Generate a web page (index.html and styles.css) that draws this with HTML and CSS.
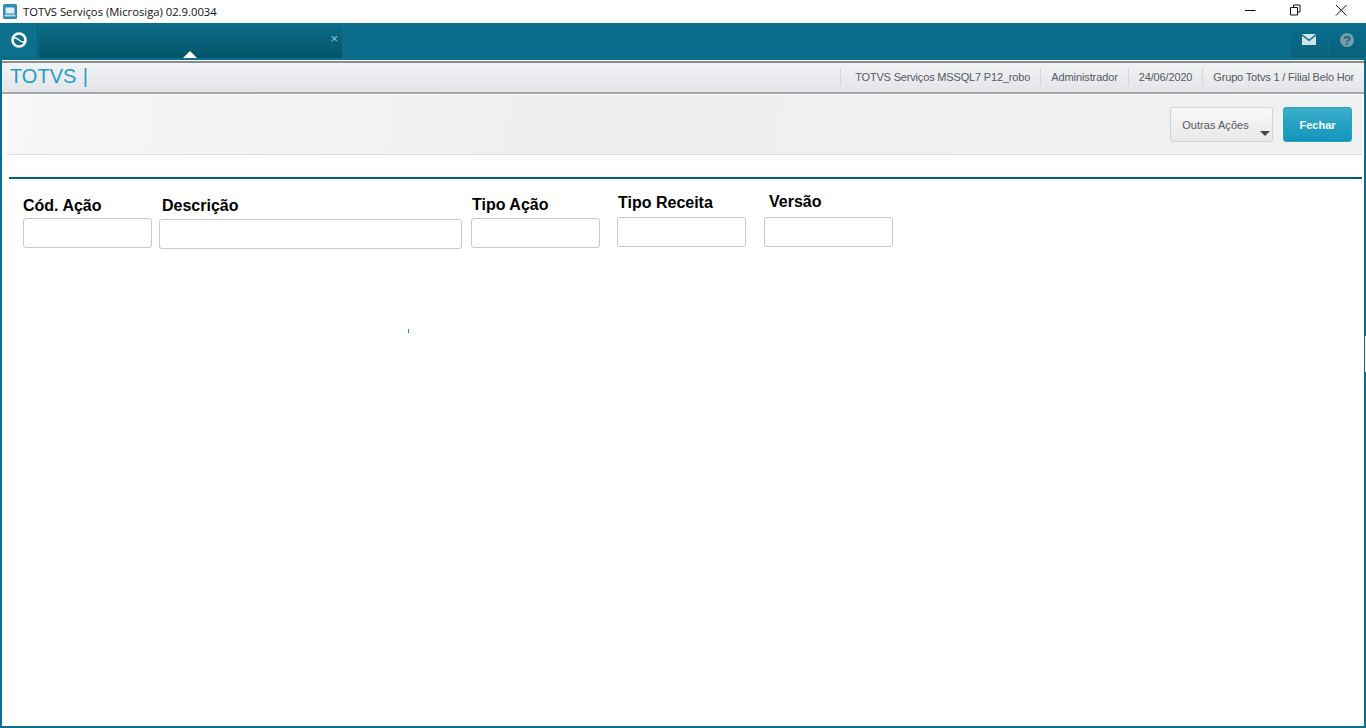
FILE: index.html
```html
<!DOCTYPE html>
<html lang="pt">
<head>
<meta charset="utf-8">
<title>TOTVS Serviços (Microsiga) 02.9.0034</title>
<link rel="stylesheet" href="styles.css">
</head>
<body>
<div class="window">
  <div class="titlebar">
    <svg class="app-icon" width="14" height="15" viewBox="0 0 14 15"><rect x="0" y="0" width="14" height="15" rx="1.5" fill="#2a8db8"/><rect x="2.500" y="3.500" width="9" height="6" fill="#e4eef2"/><rect x="1.500" y="10.500" width="11" height="2" fill="#b9d6e2"/></svg>
    <span class="title-text">TOTVS Serviços (Microsiga) 02.9.0034</span>
    <div class="win-controls">
      <svg class="win-btn" width="46" height="20" viewBox="0 0 46 20"><path d="M17 10.500h10.500" stroke="#111" fill="none"/></svg>
      <svg class="win-btn" width="46" height="20" viewBox="0 0 46 20"><path d="M16.500 7.500h7v7.500h-7zM19.500 7.500v-2.500h6.500v7h-2.500" stroke="#111" fill="none"/></svg>
      <svg class="win-btn" width="46" height="20" viewBox="0 0 46 20"><path d="M16 5l10.500 10.500M26.500 5l-10.500 10.500" stroke="#111" fill="none"/></svg>
    </div>
  </div>
  <div class="frame">
    <div class="topbar">
      <div class="logo-box">
        <svg width="18" height="18" viewBox="0 0 18 18"><circle cx="9" cy="9" r="6.500" fill="none" stroke="#fff" stroke-width="2.600"/><path d="M4 7.500C7 4.500 11 13.500 14 10.500" fill="none" stroke="#fff" stroke-width="1.300"/></svg>
      </div>
      <div class="tab">
        <span class="tab-close">×</span>
        <span class="tab-arrow"></span>
      </div>
      <div class="top-actions">
        <div class="top-btn">
          <svg width="14" height="11" viewBox="0 0 14 11"><path d="M0 0h14L7 5.500z" fill="#cfe3ea"/><path d="M0 1.800V11h14V1.800L7 7.300z" fill="#cfe3ea"/></svg>
        </div>
        <div class="top-btn">
          <svg width="16" height="16" viewBox="0 0 16 16"><circle cx="8" cy="8" r="7" fill="#7c9bab"/><text x="8" y="12.500" class="help-mark" text-anchor="middle">?</text></svg>
        </div>
      </div>
    </div>
    <div class="infobar">
      <span class="brand">TOTVS |</span>
      <div class="info-items">
        <span class="info-item info-server">TOTVS Serviços MSSQL7 P12_robo</span>
        <span class="info-item info-admin">Administrador</span>
        <span class="info-item info-date">24/06/2020</span>
        <span class="info-item info-group">Grupo Totvs 1 / Filial Belo Hor</span>
      </div>
    </div>
    <div class="toolbar">
      <button class="btn btn-other">Outras Ações<span class="caret"></span></button>
      <button class="btn btn-close">Fechar</button>
    </div>
    <div class="rule"></div>
    <div class="fields">
      <div class="field f1"><label class="lbl">Cód. Ação</label><div class="input"></div></div>
      <div class="field f2"><label class="lbl">Descrição</label><div class="input"></div></div>
      <div class="field f3"><label class="lbl">Tipo Ação</label><div class="input"></div></div>
      <div class="field f4"><label class="lbl">Tipo Receita</label><div class="input"></div></div>
      <div class="field f5"><label class="lbl">Versão</label><div class="input"></div></div>
    </div>
    <span class="tick"></span>
    <span class="edge-notch"></span>
  </div>
</div>
</body>
</html>
```
FILE: styles.css
```css
* { box-sizing: border-box; }
html, body { margin: 0; padding: 0; height: 100%; overflow: hidden; background: #fff; }
body { font-family: "Liberation Sans", Arial, sans-serif; }
.window { width: 1366px; height: 728px; display: flex; flex-direction: column; }

.titlebar { height: 23px; display: flex; align-items: center; padding-left: 3px; background: #fff; flex: none; }
.app-icon { flex: none; }
.title-text { font-family: "Open Sans", sans-serif; font-size: 11.25px; color: #111; margin-left: 6px; }
.win-controls { margin-left: auto; display: flex; gap: 0; margin-top: -3px; }
.win-btn { display: block; }

.frame { position: relative; flex: 1; display: flex; flex-direction: column; border: 2px solid #0a6e8c; border-top: 0; min-height: 0; }

.topbar { height: 37px; margin: 0 -2px; background: #0a6e8c; display: flex; flex: none; }
.logo-box { width: 38px; height: 35px; display: flex; align-items: center; justify-content: center; background: #0b708e; border-right: 1px solid #075a72; border-bottom: 1px solid #08627c; padding-bottom: 1px; }
.tab { position: relative; width: 303px; height: 34px; margin: 1px 0 0 1px; background: linear-gradient(#0b6c89, #04546a); }
.tab-close { position: absolute; right: 4px; top: 7px; font-size: 13px; line-height: 16px; color: #a9c6d1; }
.tab-arrow { position: absolute; left: 144px; bottom: 0; width: 0; height: 0; border-left: 7px solid transparent; border-right: 7px solid transparent; border-bottom: 7px solid #fff; }
.top-actions { margin-left: auto; display: flex; gap: 1px; }
.top-btn { width: 37px; height: 34px; background: linear-gradient(#0a6e8c, #08627c); border-bottom: 1px solid #085a71; display: flex; align-items: center; justify-content: center; padding-right: 1px; }
.help-mark { font: bold 13px "Liberation Sans", sans-serif; fill: #0a6580; }

.infobar { height: 33px; flex: none; margin-top: 1px; border-top: 2px solid #8b8d8f; border-bottom: 2px solid #a5a7a9; background: linear-gradient(#f2f3f5, #e3e5e9); display: flex; align-items: center; padding: 0 10px 2px 8px; }
.brand { font-size: 20px; word-spacing: 1px; color: #1f9fc6; }
.info-items { margin-left: auto; display: flex; align-items: center; }
.info-item { font-size: 11px; letter-spacing: -0.1px; color: #555a60; line-height: 18px; padding: 0 10px; border-left: 1px solid #d4d6d9; white-space: nowrap; }
.info-server { letter-spacing: -0.17px; padding-left: 14px; }
.info-admin { letter-spacing: -0.1px; }
.info-date { letter-spacing: -0.15px; }
.info-group { letter-spacing: -0.17px; padding: 0 0 0 10px; }

.toolbar { height: 60px; flex: none; margin: 1px 2px 0 5px; background: linear-gradient(100deg, #f7f7f8, #efeff0 40%, #f0f1f2); border-bottom: 1px solid #dcdcdc; display: flex; justify-content: flex-end; align-items: flex-start; gap: 10px; padding: 12px 10px 0 0; }
.btn { height: 35px; border-radius: 3px; font-family: "Liberation Sans", sans-serif; font-size: 11px; padding: 0; }
.btn-other { position: relative; width: 103px; padding: 0 12px 0 0; background: linear-gradient(#f8f8f8, #e9e9e9); border: 1px solid #d2d2d2; color: #54585e; letter-spacing: 0.05px; }
.caret { position: absolute; right: 2px; bottom: 5px; width: 0; height: 0; border-left: 5px solid transparent; border-right: 5px solid transparent; border-top: 5px solid #44484e; }
.btn-close { width: 69px; border: 1px solid #2aa0c3; background: linear-gradient(#3aaeca, #1296bd); color: #fff; font-weight: bold; }

.rule { height: 2px; flex: none; margin: 22px 2px 0 7px; background: #005f78; }

.fields { flex: 1; display: flex; align-items: flex-start; padding-left: 21px; }
.field { display: flex; flex-direction: column; flex: none; }
.lbl { font-size: 16px; font-weight: bold; color: #000; line-height: 18px; }
.input { width: 129px; height: 30px; background: #fff; border: 1px solid #c8c8c8; border-radius: 3px; margin-top: 3px; }
.f1 { margin-top: 18px; }
.f2 { margin-top: 18px; margin-left: 7px; }
.f2 .input { width: 303px; margin-top: 4px; }
.f2 .lbl { padding-left: 3px; }
.f3 { margin-top: 17px; margin-left: 9px; }
.f3 .lbl { padding-left: 1px; }
.f3 .input { margin-top: 4px; }
.f4 { margin-top: 15px; margin-left: 17px; }
.f4 .lbl { padding-left: 1px; }
.f4 .input { margin-top: 5px; }
.f5 { margin-top: 14px; margin-left: 18px; }
.f5 .lbl { padding-left: 5px; }
.f5 .input { margin-top: 6px; }

.tick { position: absolute; left: 406px; top: 306px; width: 1px; height: 4px; background: #1d8fc0; }
.edge-notch { position: absolute; right: -2px; top: 313px; width: 1px; height: 36px; background: #fff; }
```
